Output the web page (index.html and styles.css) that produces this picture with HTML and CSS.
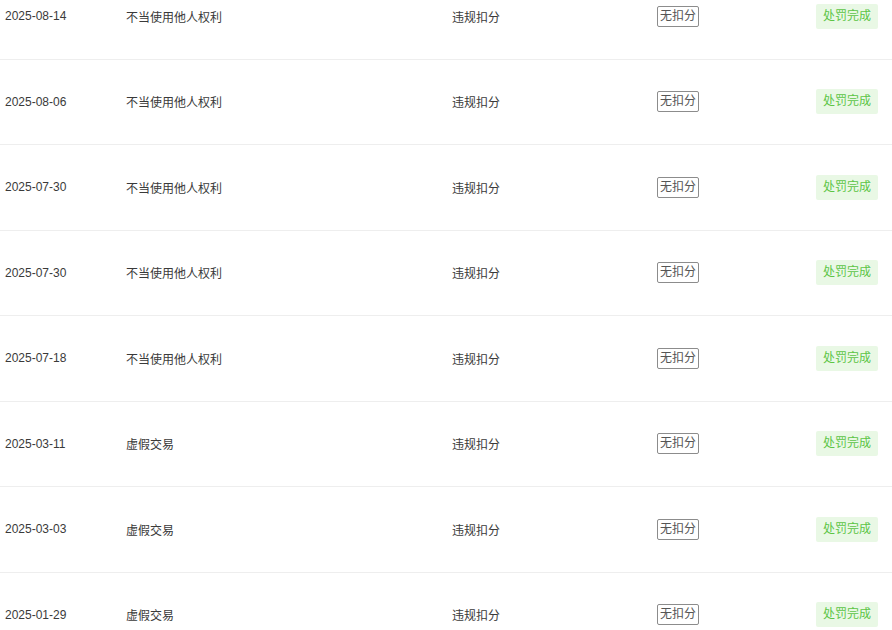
FILE: index.html
```html
<!DOCTYPE html>
<html lang="zh-CN">
<head>
    <meta charset="UTF-8">
    <meta name="viewport" content="width=device-width, initial-scale=1.0">
    <title>违规记录</title>
    <link rel="stylesheet" href="styles.css">
</head>
<body>
    <div class="record-list">
        <div class="record-row">
            <div class="date">2025-08-14</div>
            <div>不当使用他人权利</div>
            <div>违规扣分</div>
            <div><span class="score-tag">无扣分</span></div>
            <div class="status"><span class="status-tag">处罚完成</span></div>
        </div>
        <div class="record-row">
            <div class="date">2025-08-06</div>
            <div>不当使用他人权利</div>
            <div>违规扣分</div>
            <div><span class="score-tag">无扣分</span></div>
            <div class="status"><span class="status-tag">处罚完成</span></div>
        </div>
        <div class="record-row">
            <div class="date">2025-07-30</div>
            <div>不当使用他人权利</div>
            <div>违规扣分</div>
            <div><span class="score-tag">无扣分</span></div>
            <div class="status"><span class="status-tag">处罚完成</span></div>
        </div>
        <div class="record-row">
            <div class="date">2025-07-30</div>
            <div>不当使用他人权利</div>
            <div>违规扣分</div>
            <div><span class="score-tag">无扣分</span></div>
            <div class="status"><span class="status-tag">处罚完成</span></div>
        </div>
        <div class="record-row">
            <div class="date">2025-07-18</div>
            <div>不当使用他人权利</div>
            <div>违规扣分</div>
            <div><span class="score-tag">无扣分</span></div>
            <div class="status"><span class="status-tag">处罚完成</span></div>
        </div>
        <div class="record-row">
            <div class="date">2025-03-11</div>
            <div>虚假交易</div>
            <div>违规扣分</div>
            <div><span class="score-tag">无扣分</span></div>
            <div class="status"><span class="status-tag">处罚完成</span></div>
        </div>
        <div class="record-row">
            <div class="date">2025-03-03</div>
            <div>虚假交易</div>
            <div>违规扣分</div>
            <div><span class="score-tag">无扣分</span></div>
            <div class="status"><span class="status-tag">处罚完成</span></div>
        </div>
        <div class="record-row">
            <div class="date">2025-01-29</div>
            <div>虚假交易</div>
            <div>违规扣分</div>
            <div><span class="score-tag">无扣分</span></div>
            <div class="status"><span class="status-tag">处罚完成</span></div>
        </div>
    </div>
</body>
</html>
```

FILE: styles.css
```css
body {
    margin: 0;
    background: #fff;
    color: #3a3a3a;
    font-family: "Liberation Sans", "Noto Sans CJK SC", sans-serif;
    font-size: 12px;
    overflow: hidden;
}
.record-list {
    margin-top: -26px;
}
.record-row {
    display: grid;
    grid-template-columns: 121px 326px 205px 1fr 120px;
    align-items: center;
    height: 85.5px;
    padding: 0 14px 0 5px;
    border-bottom: 1px solid #eee;
    box-sizing: border-box;
}
.score-tag {
    display: inline-block;
    padding: 2px 2px 3px;
    line-height: 14px;
    border: 1px solid #8c8c8c;
    border-radius: 2px;
    color: #555;
}
.status {
    text-align: right;
}
.status-tag {
    display: inline-block;
    padding: 6px 7px;
    line-height: 13px;
    border-radius: 2px;
    background: #e9f8e5;
    color: #5cc545;
}
```
